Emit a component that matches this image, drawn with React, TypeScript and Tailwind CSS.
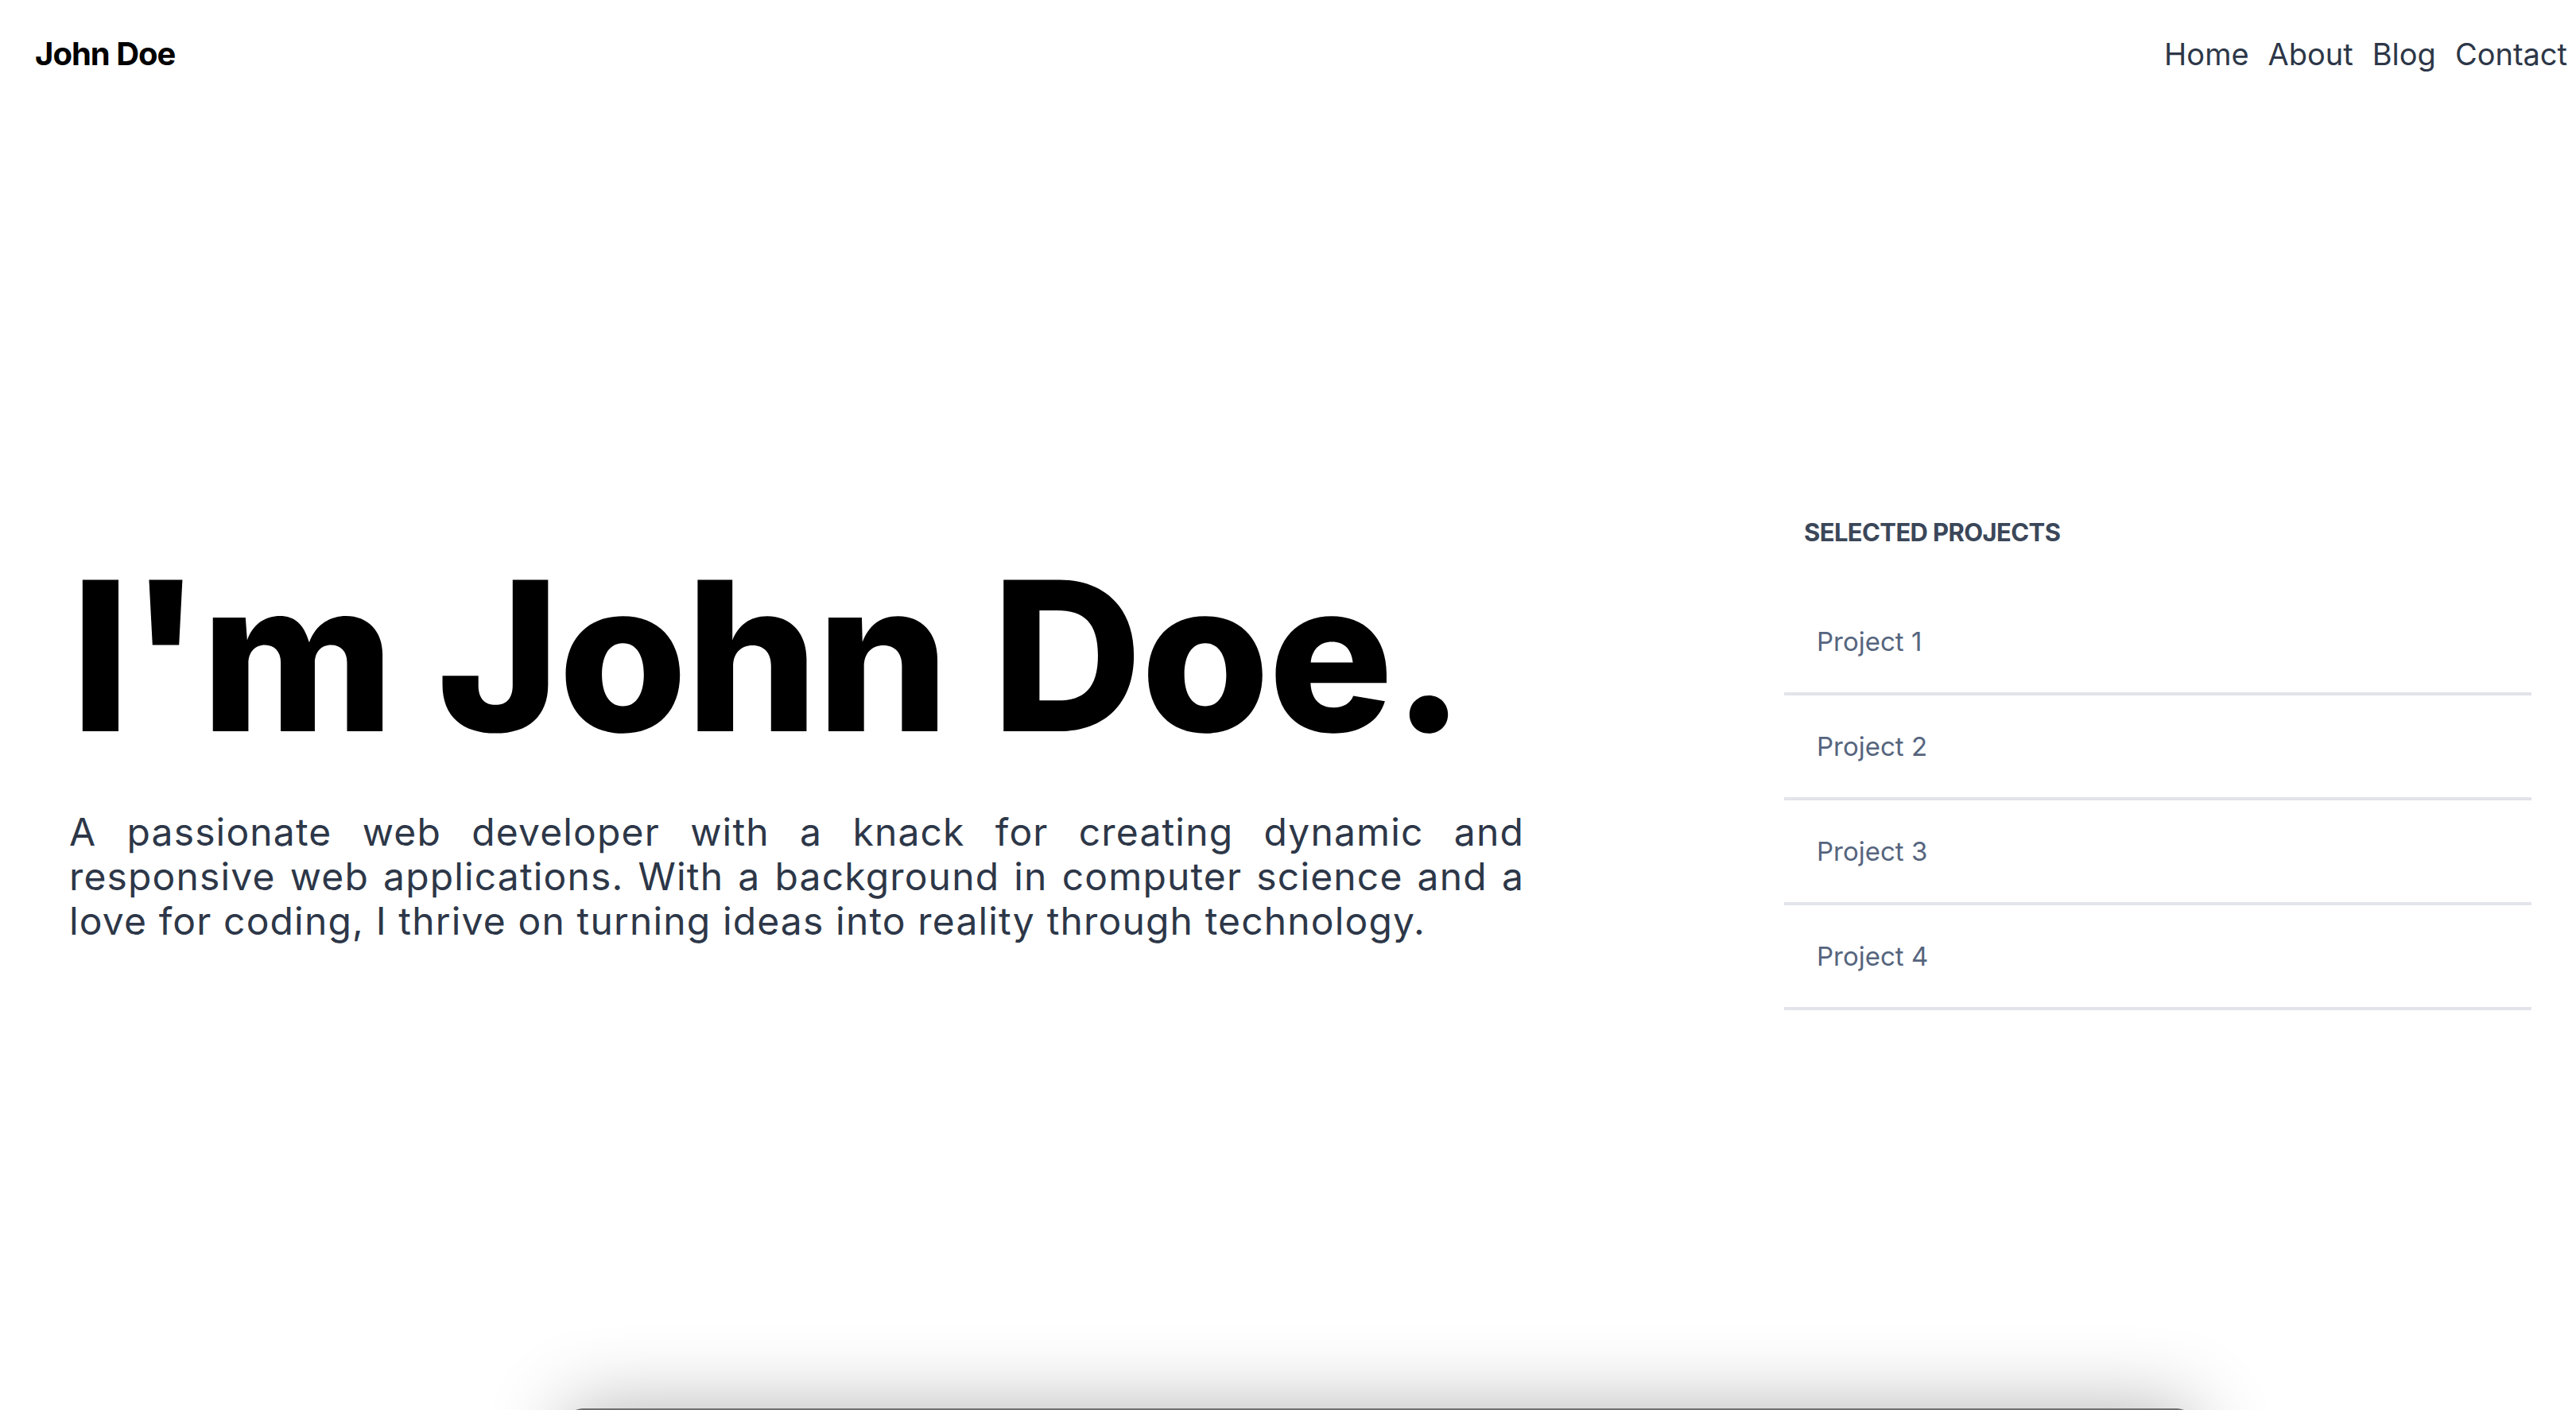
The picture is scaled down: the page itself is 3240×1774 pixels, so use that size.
import React from "react";

const projects = ["Project 1", "Project 2", "Project 3", "Project 4"];
const links = ["Home", "About", "Blog", "Contact"];

const Header = () => {
  return (
    <header className="flex shrink-0 items-center justify-between pl-[44px] pr-[11px] pt-[40px] pb-[49px]">
      <a className="text-[40px] font-bold leading-[56px] tracking-tight text-black">John Doe</a>
      <nav className="flex items-center gap-[24px] text-[38px] leading-[56px] text-[#2d3748]">
        {links.map((link) => (
          <a key={link}>{link}</a>
        ))}
      </nav>
    </header>
  );
};

const Intro = () => {
  return (
    <div className="w-[1830px] pb-[37px]">
      <h1 className="pl-[2px] text-[262px] font-extrabold leading-none tracking-[-0.007em] text-black">
        I'm John Doe.
      </h1>
      <p className="mt-[63px] text-[48px] leading-[56px] tracking-[0.024em] text-[#2d3748]">
        <span className="block text-justify [text-align-last:justify]">
          A passionate web developer with a knack for creating dynamic and
        </span>
        <span className="block text-justify [text-align-last:justify]">
          responsive web applications. With a background in computer science and a
        </span>
        <span className="block">
          love for coding, I thrive on turning ideas into reality through technology.
        </span>
      </p>
    </div>
  );
};

const ProjectList = () => {
  return (
    <div className="w-[940px]">
      <h2 className="pl-[25px] text-[31px] font-bold uppercase leading-[48px] tracking-[-0.02em] text-[#3b4759]">
        Selected Projects
      </h2>
      <ul className="mt-[49px]">
        {projects.map((project) => (
          <li
            key={project}
            className="border-b-4 border-[#e2e4ea] px-[41px] py-[40px] text-[33px] leading-[48px] text-[#56657e]"
          >
            {project}
          </li>
        ))}
      </ul>
    </div>
  );
};

export default function App() {
  return (
    <div className="flex h-screen flex-col overflow-hidden bg-white font-['Inter',sans-serif]">
      <Header />
      <main className="flex flex-1 items-center justify-between pl-[87px] pr-[56px]">
        <Intro />
        <ProjectList />
      </main>
      <div className="-mb-[300px] ml-[713px] h-[302px] w-[2045px] shrink-0 rounded-t-[20px] bg-[#6f6f6f] shadow-[0_0_100px_rgba(0,0,0,0.3)]" />
    </div>
  );
}
